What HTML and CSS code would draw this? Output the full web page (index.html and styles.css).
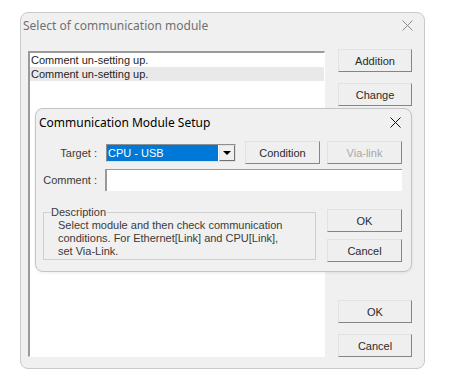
FILE: index.html
```html
<!DOCTYPE html>
<html lang="en">
<head>
    <meta charset="UTF-8">
    <title>Select of communication module</title>
    <link rel="stylesheet" href="styles.css">
</head>
<body>
    <div class="window">
        <div class="titlebar">
            <span class="title">Select of communication module</span>
            <svg class="close" width="11" height="11" viewBox="0 0 11 11"><path d="M0.5 0.5L10.5 10.5M10.5 0.5L0.5 10.5" stroke="#8a8a8a" stroke-width="1"/></svg>
        </div>
        <div class="content">
            <div class="listbox">
                <div class="item">Comment un-setting up.</div>
                <div class="item selected">Comment un-setting up.</div>
            </div>
            <div class="side">
                <div class="btn">Addition</div>
                <div class="btn">Change</div>
                <div class="btn">Delete</div>
                <div class="btn push">OK</div>
                <div class="btn">Cancel</div>
            </div>
        </div>

        <div class="dialog">
            <div class="titlebar dlg-title">
                <span class="title">Communication Module Setup</span>
                <svg class="close" width="11" height="11" viewBox="0 0 11 11"><path d="M0.5 0.5L10.5 10.5M10.5 0.5L0.5 10.5" stroke="#111" stroke-width="1"/></svg>
            </div>
            <div class="dlg-body">
                <div class="row">
                    <label class="lbl">Target :</label>
                    <div class="combo">
                        <span class="combo-value">CPU - USB</span>
                        <span class="combo-arrow"><span class="tri"></span></span>
                    </div>
                    <div class="btn cond">Condition</div>
                    <div class="btn disabled">Via-link</div>
                </div>
                <div class="row row2">
                    <label class="lbl">Comment :</label>
                    <div class="textbox"></div>
                </div>
                <div class="row row3">
                    <fieldset class="group">
                        <legend>Description</legend>
                        <p>Select module and then check communication conditions. For Ethernet[Link] and CPU[Link], set Via-Link.</p>
                    </fieldset>
                    <div class="dlg-buttons">
                        <div class="btn">OK</div>
                        <div class="btn">Cancel</div>
                    </div>
                </div>
            </div>
        </div>
    </div>
</body>
</html>
```

FILE: styles.css
```css
body {
    margin: 0;
    background-color: #ffffff;
    font-family: "Liberation Sans", Arial, sans-serif;
    font-size: 11px;
    color: #2a2a2a;
}
.window {
    position: relative;
    margin: 12px 0 0 20px;
    width: 403px;
    height: 355px;
    border: 1px solid #c9c9c9;
    border-radius: 8px;
    background-color: #f0f0f0;
}
.titlebar {
    display: flex;
    align-items: center;
    justify-content: space-between;
    height: 24px;
    padding: 0 11px 0 2px;
}
.titlebar .title {
    font-family: "Noto Sans", "Open Sans", sans-serif;
    font-size: 12px;
    color: #707070;
}
.content {
    display: flex;
    gap: 13px;
    padding: 14px 12px 11px 7px;
    height: 306px;
}
.listbox {
    width: 295px;
    background-color: #ffffff;
    border-left: 2px solid #9a9a9a;
    border-top: 2px solid #9a9a9a;
    border-right: 1px solid #ffffff;
    border-bottom: 1px solid #ffffff;
}
.item {
    height: 14px;
    line-height: 14px;
    padding-left: 1px;
    color: #1e1e1e;
}
.item.selected {
    background-color: #e9e9e9;
}
.side {
    display: flex;
    flex-direction: column;
    gap: 11px;
    width: 74px;
    margin-top: -2px;
}
.btn {
    box-sizing: border-box;
    height: 23px;
    width: 75px;
    display: flex;
    align-items: center;
    justify-content: center;
    background-color: #efefef;
    border: 1px solid #e2e2e2;
    border-right-color: #858585;
    border-bottom-color: #858585;
    color: #2a2a2a;
}
.side .btn {
    width: 74px;
}
.side .push {
    margin-top: auto;
}
.dialog {
    position: absolute;
    left: 14px;
    top: 95px;
    width: 375px;
    height: 162px;
    border: 1px solid #c4c4c4;
    border-radius: 8px;
    background-color: #f0f0f0;
    box-shadow: 0 1px 3px rgba(0, 0, 0, 0.08);
}
.dlg-title {
    height: 26px;
    padding: 0 10px 0 3px;
}
.dlg-title .title {
    color: #000;
}
.dlg-body {
    padding: 6px 9px 0 7px;
}
.row {
    display: flex;
    align-items: center;
}
.lbl {
    width: 54px;
    text-align: right;
    color: #3a3a3a;
}
.combo {
    box-sizing: border-box;
    display: flex;
    width: 130px;
    height: 18px;
    margin: 0 9px;
    background-color: #ffffff;
    border-left: 1px solid #8e8e8e;
    border-top: 1px solid #8e8e8e;
    border-right: 1px solid #e0e0e0;
    border-bottom: 1px solid #e0e0e0;
}
.combo-value {
    flex: 1;
    background-color: #0078d7;
    color: #ffffff;
    line-height: 16px;
    padding-left: 1px;
    margin-right: 1px;
}
.combo-arrow {
    width: 16px;
    display: flex;
    align-items: center;
    justify-content: center;
    background-color: #f0f0f0;
    border-top: 1px solid #e2e2e2;
    border-left: 1px solid #e2e2e2;
    border-right: 1px solid #707070;
    border-bottom: 1px solid #707070;
    box-sizing: border-box;
}
.tri {
    width: 0;
    height: 0;
    border-left: 4px solid transparent;
    border-right: 4px solid transparent;
    border-top: 4px solid #000;
}
.cond {
    margin-right: 7px;
}
.disabled {
    color: #a8a8a8;
}
.row2 {
    margin-top: 5px;
}
.textbox {
    box-sizing: border-box;
    width: 297px;
    height: 22px;
    margin-left: 8px;
    background-color: #ffffff;
    border-left: 2px solid #9a9a9a;
    border-top: 1px solid #9a9a9a;
}
.row3 {
    margin-top: 15px;
    align-items: flex-start;
    gap: 11px;
}
.group {
    box-sizing: border-box;
    width: 273px;
    height: 54px;
    margin: 0;
    padding: 0 30px 0 14px;
    border: 1px solid #cfcfcf;
}
.group legend {
    padding: 0 1px 0 0;
    margin-left: -7px;
    color: #3a3a3a;
    line-height: 12px;
}
.group p {
    margin: 1px 0 0;
    line-height: 13px;
    color: #3a3a3a;
}
.dlg-buttons {
    display: flex;
    flex-direction: column;
    gap: 7px;
    margin-top: 3px;
}
```
